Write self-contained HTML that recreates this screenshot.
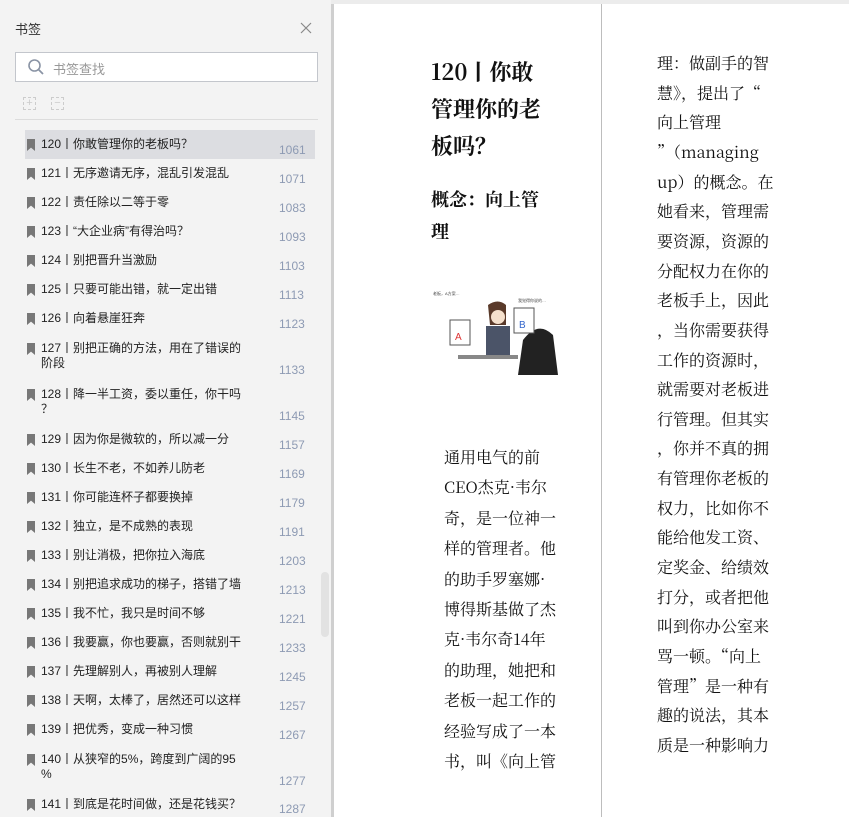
<!DOCTYPE html>
<html><head><meta charset="utf-8"><style>
*{margin:0;padding:0;box-sizing:border-box}
body{width:849px;height:817px;overflow:hidden;background:#fff;position:relative;font-family:"Liberation Sans","Noto Sans CJK SC",sans-serif}
.sb{position:absolute;left:0;top:0;width:331px;height:817px;background:#f3f3f3}
.top{position:absolute;left:0;top:0;width:849px;height:4px;background:#ececec}
.div{position:absolute;left:331px;top:4px;width:3px;height:813px;background:#cfcfcf}
.a{position:absolute;white-space:nowrap}
.it{position:absolute;left:41px;font-size:12px;color:#222;line-height:15px}
.bm{position:absolute;left:27px;width:8px;height:12px;background:#777;clip-path:polygon(0 0,100% 0,100% 100%,50% 72%,0 100%)}
.n{position:absolute;left:279px;font-size:12px;color:#8d9ab3}
.t{position:absolute;font-family:"Noto Serif CJK SC","Liberation Serif",serif;font-size:16px;color:#111;white-space:nowrap;line-height:20px}
</style></head><body>
<div class="top"></div>
<div class="sb">
<div class="a" style="left:15px;top:19px;font-size:13px;color:#333">书签</div>
<svg class="a" style="left:300px;top:22px" width="12" height="12"><path d="M1 1L11 11M11 1L1 11" stroke="#888" stroke-width="1.2"/></svg>
<div class="a" style="left:15px;top:52px;width:303px;height:30px;background:#fff;border:1px solid #c3c6cc"></div>
<svg class="a" style="left:27px;top:58px" width="18" height="18"><circle cx="7.5" cy="7.5" r="5.5" fill="none" stroke="#8a94a5" stroke-width="1.6"/><path d="M11.5 11.5L16 16" stroke="#8a94a5" stroke-width="1.8"/></svg>
<div class="a" style="left:53px;top:59px;font-size:13px;color:#999">书签查找</div>
<div class="a" style="left:23px;top:97px;width:13px;height:13px;border:1px dashed #ccc;color:#ccc;font-size:11px;line-height:11px;text-align:center">+</div>
<div class="a" style="left:51px;top:97px;width:13px;height:13px;border:1px dashed #ccc;color:#ccc;font-size:11px;line-height:11px;text-align:center">−</div>
<div class="a" style="left:15px;top:119px;width:303px;height:1px;background:#dcdcdc"></div>
<div class="a" style="left:25px;top:130px;width:290px;height:29px;background:#dcdde1"></div>
<div class="a" style="left:321px;top:572px;width:8px;height:65px;background:#e2e2e2;border-radius:4px"></div>
</div>
<div class="div"></div>
<div id="list"></div>
<div style="position:absolute;left:601px;top:4px;width:1px;height:813px;background:#bdbdbd"></div>

<div class="a" style="left:431px;top:53px;font-family:'Noto Serif CJK SC',serif;font-size:22px;font-weight:bold;line-height:37px;color:#111">120丨你敢<br>管理你的老<br>板吗？</div>
<div class="a" style="left:431px;top:183px;font-family:'Noto Serif CJK SC',serif;font-size:18px;font-weight:bold;line-height:32px;color:#111">概念：向上管<br>理</div>

<svg class="a" style="left:428px;top:280px" width="134" height="98">
<rect width="134" height="98" fill="#fff"/>
<path d="M95 60 Q110 40 125 55 L130 95 L90 95 Z" fill="#222"/>
<path d="M60 25 Q70 18 78 25 L78 45 L62 45 Z" fill="#5a3a2a"/>
<circle cx="70" cy="37" r="7" fill="#f5e0cc"/>
<rect x="58" y="46" width="24" height="30" fill="#4b5468"/>
<rect x="22" y="40" width="20" height="25" fill="#fff" stroke="#555"/><text x="27" y="60" font-size="10" fill="#d33">A</text>
<rect x="86" y="28" width="20" height="25" fill="#fff" stroke="#555"/><text x="91" y="48" font-size="10" fill="#36c">B</text>
<rect x="30" y="75" width="60" height="4" fill="#888"/>
<text x="5" y="15" font-size="4" fill="#444">老板，A方案…</text>
<text x="90" y="22" font-size="4" fill="#444">我觉得你说的…</text>
</svg>

<div id="c1"></div><div id="c2"></div>
<script>
var items=[["120丨你敢管理你的老板吗？",137,"1061",143],["121丨无序邀请无序，混乱引发混乱",166,"1071",172],["122丨责任除以二等于零",195,"1083",201],["123丨“大企业病”有得治吗？",224,"1093",230],["124丨别把晋升当激励",253,"1103",259],["125丨只要可能出错，就一定出错",282,"1113",288],["126丨向着悬崖狂奔",311,"1123",317],["127丨别把正确的方法，用在了错误的<br>阶段",341,"1133",363],["128丨降一半工资，委以重任，你干吗<br>？",387,"1145",409],["129丨因为你是微软的，所以减一分",432,"1157",438],["130丨长生不老，不如养儿防老",461,"1169",467],["131丨你可能连杯子都要换掉",490,"1179",496],["132丨独立，是不成熟的表现",519,"1191",525],["133丨别让消极，把你拉入海底",548,"1203",554],["134丨别把追求成功的梯子，搭错了墙",577,"1213",583],["135丨我不忙，我只是时间不够",606,"1221",612],["136丨我要赢，你也要赢，否则就别干",635,"1233",641],["137丨先理解别人，再被别人理解",664,"1245",670],["138丨天啊，太棒了，居然还可以这样",693,"1257",699],["139丨把优秀，变成一种习惯",722,"1267",728],["140丨从狭窄的5%，跨度到广阔的95<br>%",752,"1277",774],["141丨到底是花时间做，还是花钱买？",797,"1287",802]];
var h="";items.forEach(function(i){h+='<div class="bm" style="top:'+(i[1]+2)+'px"></div><div class="it" style="top:'+i[1]+'px">'+i[0]+'</div><div class="n" style="top:'+i[3]+'px">'+i[2]+'</div>';});
document.getElementById("list").innerHTML=h;
var c1=["通用电气的前","CEO杰克·韦尔","奇，是一位神一","样的管理者。他","的助手罗塞娜·","博得斯基做了杰","克·韦尔奇14年","的助理，她把和","老板一起工作的","经验写成了一本","书，叫《向上管"];
h="";c1.forEach(function(s,k){h+='<div class="t" style="left:444px;top:'+(447+k*30.4)+'px">'+s+'</div>';});
document.getElementById("c1").innerHTML=h;
var c2=["理：做副手的智","慧》，提出了“","向上管理","”（managing","up）的概念。在","她看来，管理需","要资源，资源的","分配权力在你的","老板手上，因此","，当你需要获得","工作的资源时，","就需要对老板进","行管理。但其实","，你并不真的拥","有管理你老板的","权力，比如你不","能给他发工资、","定奖金、给绩效","打分，或者把他","叫到你办公室来","骂一顿。“向上","管理”是一种有","趣的说法，其本","质是一种影响力"];
h="";c2.forEach(function(s,k){h+='<div class="t" style="left:657px;top:'+(53+k*29.65)+'px">'+s+'</div>';});
document.getElementById("c2").innerHTML=h;
</script>
</body></html>
